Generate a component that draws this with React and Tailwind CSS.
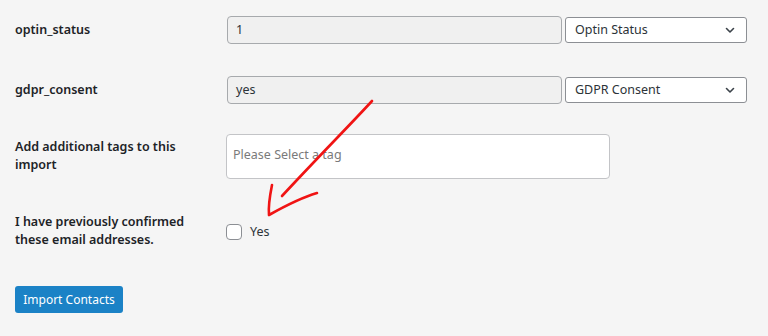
import React from "react";

function Chevron() {
  return (
    <svg width="12" height="12" viewBox="0 0 12 12" className="shrink-0">
      <path d="M2.5 4.5 L6 8 L9.5 4.5" fill="none" stroke="#3c434a" strokeWidth="1.6" strokeLinecap="round" strokeLinejoin="round" />
    </svg>
  );
}

function Select({ label }) {
  return (
    <div className="flex h-[26px] w-[182px] items-center justify-between rounded-[3px] border border-[#8c8f94] bg-white pl-[9px] pr-[10px] text-[12.5px] text-[#2c3338]">
      <span>{label}</span>
      <Chevron />
    </div>
  );
}

function DisabledInput({ value }) {
  return (
    <div className="flex h-[28px] w-[335px] items-center rounded-[4px] border border-[#a7aaad] bg-[#f0f0f0] px-[8px] text-[12.5px] text-[#2c3338]">
      {value}
    </div>
  );
}

export default function App() {
  return (
    <div
      className="relative h-[336px] w-[768px] overflow-hidden bg-[#f5f5f5] pt-[16px] pl-[15px]"
      style={{ fontFamily: '"Segoe UI", "Noto Sans", "Open Sans", sans-serif' }}
    >
      <div className="flex h-[28px] items-center">
        <div className="w-[212px] text-[12.5px] font-semibold text-[#1d2327]">optin_status</div>
        <div className="flex items-center gap-[3px]">
          <DisabledInput value="1" />
          <Select label="Optin Status" />
        </div>
      </div>

      <div className="mt-[32px] flex h-[28px] items-center">
        <div className="w-[212px] text-[12.5px] font-semibold text-[#1d2327]">gdpr_consent</div>
        <div className="flex items-center gap-[3px]">
          <DisabledInput value="yes" />
          <Select label="GDPR Consent" />
        </div>
      </div>

      <div className="mt-[30px] flex items-start">
        <div className="w-[211px] pt-[4px] pr-[20px] text-[12.5px] font-semibold leading-[18px] text-[#1d2327]">
          Add additional tags to this import
        </div>
        <div className="flex h-[45px] w-[384px] items-center rounded-[4px] border border-[#c3c4c7] bg-white px-[6px] pb-[2px] text-[12.5px] text-[#7a7a7a]">
          Please Select a tag
        </div>
      </div>

      <div className="mt-[34px] flex items-start">
        <div className="w-[211px] pr-[20px] text-[12.5px] font-semibold leading-[18px] text-[#1d2327]">
          I have previously confirmed these email addresses.
        </div>
        <div className="mt-[11px] flex items-center gap-[8px]">
          <div className="h-[16px] w-[16px] rounded-[4px] border border-[#8c8f94] bg-white" />
          <span className="text-[12.5px] leading-[16px] text-[#2c3338]">Yes</span>
        </div>
      </div>

      <div className="mt-[37px] flex h-[27px] w-[108px] items-center justify-center rounded-[3px] bg-[#1b82c6] text-[12px] text-white">
        Import Contacts
      </div>

      <svg className="pointer-events-none absolute left-0 top-0" width="768" height="336" viewBox="0 0 768 336">
        <path
          d="M372 101 C350 125 320 155 282 196"
          fill="none"
          stroke="#f01414"
          strokeWidth="2.6"
          strokeLinecap="round"
        />
        <path
          d="M272 185 C270 195 268 205 269 215 C285 206 300 198 317 193"
          fill="none"
          stroke="#f01414"
          strokeWidth="2.6"
          strokeLinecap="round"
          strokeLinejoin="round"
        />
      </svg>
    </div>
  );
}
